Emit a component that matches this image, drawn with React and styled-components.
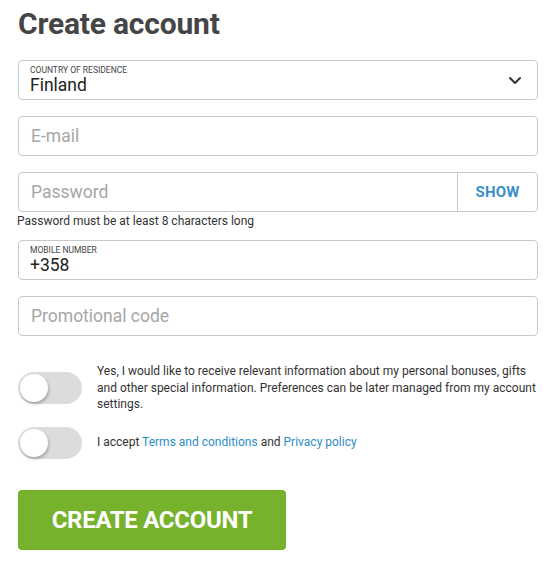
import React, { useState } from "react";
import styled, { createGlobalStyle } from "styled-components";

const Global = createGlobalStyle`
  html, body { margin: 0; padding: 0; background: #fff; }
  body { font-family: Roboto, "Liberation Sans", Arial, sans-serif; color: #333; }
  * { box-sizing: border-box; }
`;

const Page = styled.div`
  width: 557px;
  padding: 0 19px 0 18px;
`;

const Title = styled.h1`
  margin: 0;
  padding-top: 4px;
  height: 60px;
  font-size: 30px;
  font-weight: 700;
  color: #454545;
  letter-spacing: -0.2px;
  line-height: 40px;
`;

const Fields = styled.div`
  display: flex;
  flex-direction: column;
`;

const Field = styled.div`
  position: relative;
  display: flex;
  height: 40px;
  border: 1px solid #c9c9c9;
  border-radius: 4px;
  margin-bottom: ${(p) => p.$mb ?? 16}px;
  background: #fff;
`;

const FieldBody = styled.div`
  flex: 1;
  display: flex;
  flex-direction: column;
  justify-content: center;
  padding: 0 11px;
`;

const Label = styled.div`
  font-size: 8.5px;
  text-transform: uppercase;
  color: #444;
  line-height: 10px;
  margin-top: 0;
`;

const Value = styled.div`
  font-size: 17.5px;
  color: #222;
  line-height: 21px;
`;

const Placeholder = styled.div`
  font-size: 17.5px;
  color: #a6a6a6;
  line-height: 20px;
  padding-left: 1px;
`;

const Chevron = styled.div`
  width: 40px;
  display: flex;
  align-items: center;
  justify-content: center;
  color: #333;
  margin-right: 2px;
`;

const ShowButton = styled.div`
  width: 80px;
  border-left: 1px solid #c9c9c9;
  display: flex;
  align-items: center;
  justify-content: center;
  font-size: 15px;
  font-weight: 700;
  color: #3a8fc9;
  letter-spacing: 0.2px;
`;

const Hint = styled.div`
  font-size: 12px;
  color: #333;
  line-height: 16px;
  margin: 1px 0 11px -1px;
`;

const Consents = styled.div`
  display: flex;
  flex-direction: column;
  gap: 14px;
  margin-top: 27px;
`;

const ConsentRow = styled.div`
  display: flex;
  align-items: center;
  gap: 15px;
`;

const Track = styled.div`
  position: relative;
  flex: none;
  width: 64px;
  height: 32px;
  border-radius: 16px;
  background: #dcdcdc;
`;

const Knob = styled.div`
  position: absolute;
  top: 2px;
  left: ${(p) => (p.$on ? 34 : 2)}px;
  width: 28px;
  height: 28px;
  border-radius: 50%;
  background: #fff;
  box-shadow: 1px 2px 3px rgba(0, 0, 0, 0.25);
`;

const ConsentText = styled.div`
  font-size: 12px;
  line-height: 16.5px;
  color: #333;
`;

const Link = styled.a`
  color: #2e8cc4;
  text-decoration: none;
`;

const Submit = styled.button`
  margin-top: 31px;
  width: 268px;
  height: 60px;
  border: none;
  border-radius: 4px;
  background: #76b22b;
  color: #fff;
  font-family: Roboto, "Liberation Sans", Arial, sans-serif;
  font-size: 24px;
  font-weight: 700;
  letter-spacing: -0.3px;
  padding: 0;
`;

function Toggle() {
  const [on, setOn] = useState(false);
  return (
    <Track onClick={() => setOn(!on)}>
      <Knob $on={on} />
    </Track>
  );
}

export default function App() {
  return (
    <Page>
      <Global />
      <Title>Create account</Title>
      <Fields>
        <Field>
          <FieldBody>
            <Label>Country of residence</Label>
            <Value>Finland</Value>
          </FieldBody>
          <Chevron>
            <svg width="14" height="9" viewBox="0 0 14 9" fill="none">
              <path d="M2 2l5 5 5-5" stroke="#333" strokeWidth="2" strokeLinecap="round" strokeLinejoin="round" />
            </svg>
          </Chevron>
        </Field>
        <Field>
          <FieldBody>
            <Placeholder>E-mail</Placeholder>
          </FieldBody>
        </Field>
        <Field $mb={0}>
          <FieldBody>
            <Placeholder>Password</Placeholder>
          </FieldBody>
          <ShowButton>SHOW</ShowButton>
        </Field>
        <Hint>Password must be at least 8 characters long</Hint>
        <Field>
          <FieldBody>
            <Label>Mobile number</Label>
            <Value>+358</Value>
          </FieldBody>
        </Field>
        <Field $mb={0}>
          <FieldBody>
            <Placeholder>Promotional code</Placeholder>
          </FieldBody>
        </Field>
      </Fields>
      <Consents>
        <ConsentRow>
          <Toggle />
          <ConsentText>
            Yes, I would like to receive relevant information about my personal bonuses, gifts
            and other special information. Preferences can be later managed from my account
            settings.
          </ConsentText>
        </ConsentRow>
        <ConsentRow>
          <Toggle />
          <ConsentText>
            I accept <Link href="#">Terms and conditions</Link> and{" "}
            <Link href="#">Privacy policy</Link>
          </ConsentText>
        </ConsentRow>
      </Consents>
      <Submit>CREATE ACCOUNT</Submit>
    </Page>
  );
}
